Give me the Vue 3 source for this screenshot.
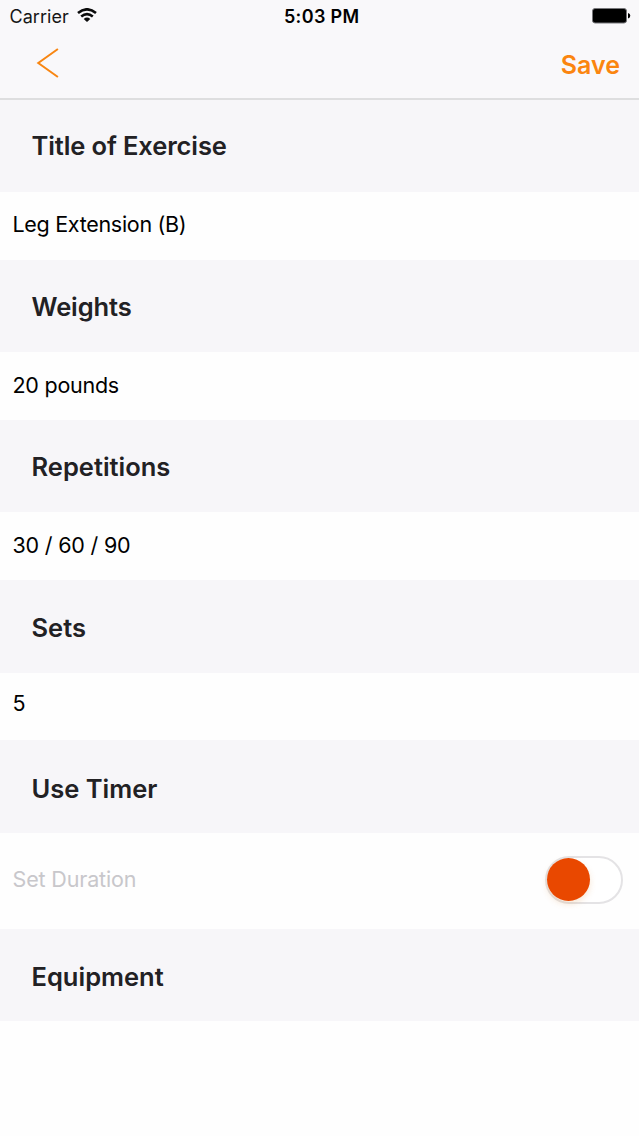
<script setup>
import { ref } from 'vue'

const fields = [
  { key: 'title', label: 'Title of Exercise', value: 'Leg Extension (B)' },
  { key: 'weights', label: 'Weights', value: '20 pounds' },
  { key: 'reps', label: 'Repetitions', value: '30 / 60 / 90' },
  { key: 'sets', label: 'Sets', value: '5' },
]
const timerOn = ref(false)
</script>

<template>
  <div class="screen">
    <header class="top">
      <div class="status">
        <div class="carrier">
          <span class="carrier-name">Carrier</span>
          <svg class="wifi" width="20" height="14" viewBox="0 0 20 14">
            <g fill="none" stroke="#0b0b0b" stroke-width="2.6">
              <path d="M1 5Q10 -2.4 19 5" />
              <path d="M4.2 8.5Q10 3.7 15.8 8.5" />
            </g>
            <path d="M6.7 10.9Q10 8.2 13.3 10.9L10 14Z" fill="#0b0b0b" />
          </svg>
        </div>
        <span class="clock">5:03 PM</span>
        <svg class="battery" width="39" height="16" viewBox="0 0 39 16">
          <rect x="0.5" y="0.5" width="34" height="14.5" rx="2.5" fill="#000" stroke="#77777a" />
          <path d="M36 5Q38.3 5.6 38.3 7.7T36 10.5Z" fill="#000" />
        </svg>
      </div>
      <nav class="nav">
        <button class="back" aria-label="Back">
          <svg width="24" height="32" viewBox="0 0 24 32">
            <path d="M21.9 2L2.3 16L21.9 30" fill="none" stroke="#f88612" stroke-width="2" />
          </svg>
        </button>
        <button class="save">Save</button>
      </nav>
    </header>

    <main>
      <section v-for="f in fields" :key="f.key" :class="f.key">
        <h2><span>{{ f.label }}</span></h2>
        <p class="value"><span>{{ f.value }}</span></p>
      </section>
      <section class="timer">
        <h2><span>Use Timer</span></h2>
        <div class="value">
          <span class="hint">Set Duration</span>
          <button class="switch" :class="{ on: timerOn }" role="switch" :aria-checked="timerOn" @click="timerOn = !timerOn">
            <i class="knob"></i>
          </button>
        </div>
      </section>
      <section class="equipment">
        <h2><span>Equipment</span></h2>
      </section>
    </main>
  </div>
</template>

<style>
body { margin: 0; background: #fff; }
</style>

<style scoped>
.screen {
  box-sizing: border-box;
  height: 1136px;
  overflow: hidden;
  background: #fefefe;
  color: #000;
  font-family: Inter, "Liberation Sans", sans-serif;
}
button { padding: 0; border: 0; background: none; font: inherit; }
.top {
  box-sizing: border-box;
  height: 100px;
  background: #f9f8fa;
  border-bottom: 2px solid #dededf;
}
.status {
  display: grid;
  grid-template-columns: 1fr auto 1fr;
  align-items: center;
  height: 32px;
  padding: 0 8px 0 9.5px;
}
.carrier { display: flex; align-items: center; gap: 8px; }
.carrier-name { font-size: 18px; letter-spacing: 0.05px; color: #161616; }
.wifi { margin-top: -2px; }
.clock { margin-left: 3px; font-size: 18px; font-weight: 560; letter-spacing: 0.35px; }
.battery { justify-self: end; }
.nav {
  display: flex;
  justify-content: space-between;
  align-items: center;
  height: 66px;
  padding: 0 19px 0 36px;
}
.back { height: 32px; margin-top: -4px; }
.back svg { display: block; }
.save { font-size: 25px; font-weight: 560; color: #fb850f; }
h2 {
  display: flex;
  align-items: center;
  box-sizing: border-box;
  height: 92px;
  margin: 0;
  padding: 1px 0 0 31.5px;
  background: #f7f6f9;
  color: #222124;
  font-size: 25.5px;
  font-weight: 560;
}
.title h2 { padding: 0 0 1px 31.5px; letter-spacing: -0.12px; }
.weights h2 { letter-spacing: -0.1px; }
.value {
  display: flex;
  align-items: center;
  box-sizing: border-box;
  height: 68px;
  margin: 0;
  padding: 0 15px 4px 12.5px;
  font-size: 21.5px;
  letter-spacing: -0.25px;
}
.title .value { letter-spacing: -0.3px; }
.weights .value, .reps .value { padding-bottom: 3px; }
.reps .value { letter-spacing: -0.2px; }
.sets h2 { height: 93px; }
.sets .value { height: 67px; padding-bottom: 8px; }
.timer h2 { height: 93px; padding-top: 3px; }
.timer .value {
  justify-content: space-between;
  height: 96px;
  padding-bottom: 3px;
  padding-right: 16px;
}
.hint { margin-bottom: 2px; color: #c8c7cb; letter-spacing: -0.15px; }
.switch {
  box-sizing: border-box;
  width: 78px;
  height: 48px;
  border: 2px solid #e4e3e5;
  border-radius: 24px;
  background: #fff;
}
.knob {
  display: block;
  width: 43px;
  height: 43px;
  border-radius: 50%;
  background: #e94800;
  box-shadow: 0 3px 6px rgba(220, 140, 60, 0.22);
}
.switch.on .knob { margin-left: auto; }
.equipment h2 { padding-top: 3px; }
</style>
